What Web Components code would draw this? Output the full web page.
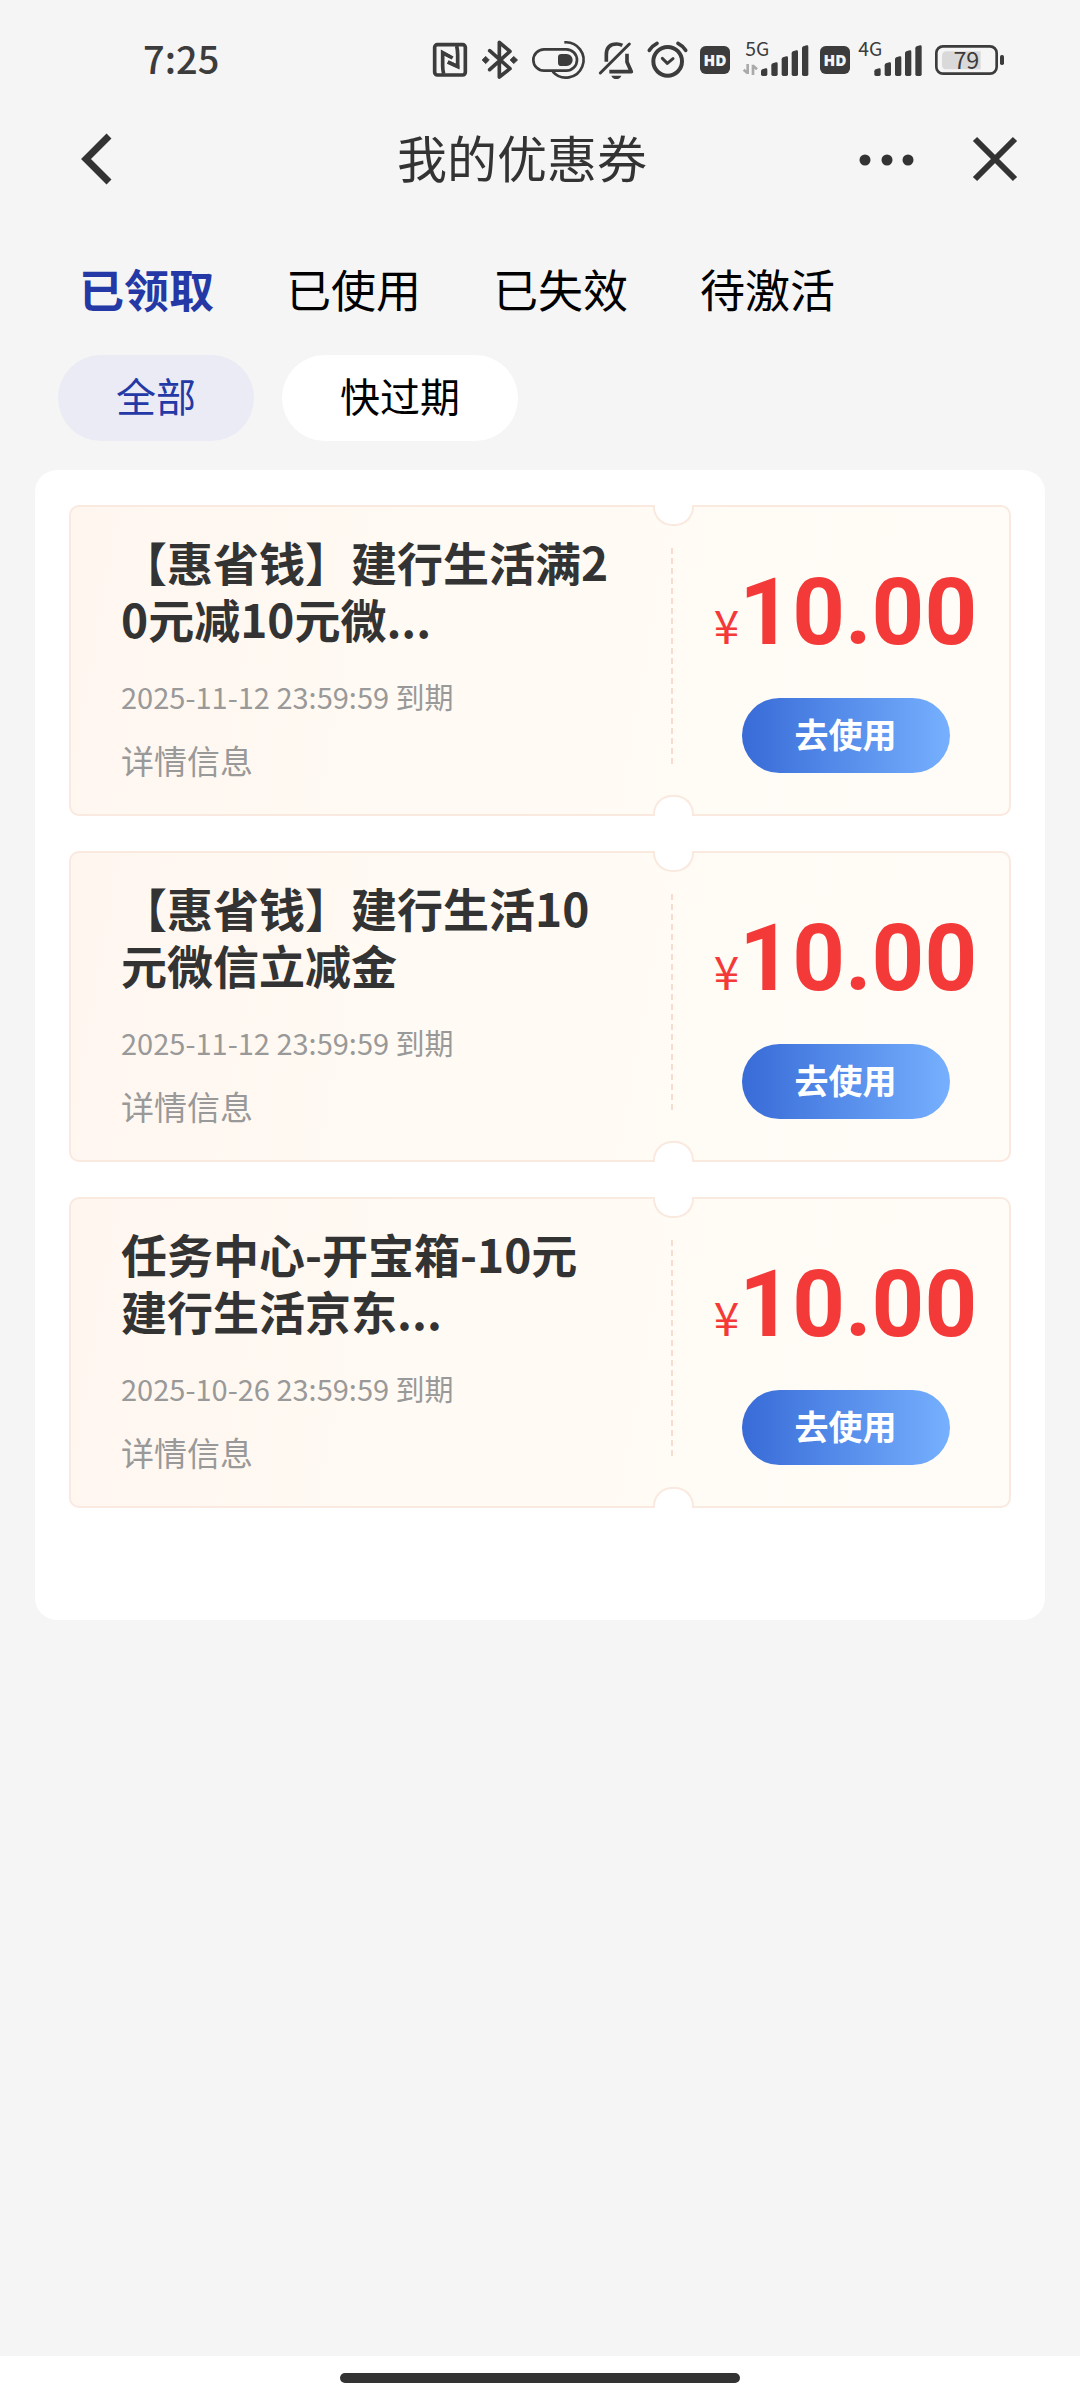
<!DOCTYPE html>
<html lang="zh-CN">
<head>
<meta charset="utf-8">
<meta name="viewport" content="width=device-width, initial-scale=1">
<title>我的优惠券</title>
<style>
  html, body { margin: 0; min-height: 100%; }
  body {
    background: #f5f5f5;
    color: #333;
    font-family: "Noto Sans CJK SC", "Noto Sans", sans-serif;
  }
</style>
</head>
<body>
<coupon-app>
  <status-bar></status-bar>
  <page-header>我的优惠券</page-header>
  <filter-tabs></filter-tabs>
  <filter-chips></filter-chips>
  <coupon-panel>
    <coupon-card price="10.00" expires="2025-11-12 23:59:59">【惠省钱】建行生活满20元减10元微...</coupon-card>
    <coupon-card price="10.00" expires="2025-11-12 23:59:59">【惠省钱】建行生活10元微信立减金</coupon-card>
    <coupon-card price="10.00" expires="2025-10-26 23:59:59">任务中心-开宝箱-10元建行生活京东...</coupon-card>
  </coupon-panel>
  <home-indicator slot="bottom"></home-indicator>
</coupon-app>

<script>
const base = `*{box-sizing:border-box} button{font:inherit;color:inherit;background:none;border:0;padding:0;margin:0;cursor:pointer} svg{display:block;overflow:visible}`;

function define(name, render) {
  customElements.define(name, class extends HTMLElement {
    constructor() {
      super();
      this.attachShadow({ mode: 'open' });
    }
    connectedCallback() {
      this.shadowRoot.innerHTML = `<style>${base}</style>` + render(this);
    }
  });
}

define('coupon-app', () => `
  <style>
    :host { display: flex; flex-direction: column; min-height: 100vh; }
    main { flex: 1; }
  </style>
  <main><slot></slot></main>
  <slot name="bottom"></slot>`);

/* Status icons share a 3:1 drawing grid, 132 units high = 44px. */
const icon = (x, w, body) =>
  `<svg viewBox="${x} 54 ${w} 132" width="${w / 3}" height="44" aria-hidden="true">${body}</svg>`;

const hd = (x) => icon(x, 90, `
  <rect x="${x}" y="78" width="90" height="84" rx="17" fill="#3c3c3c"/>
  <text class="hd" x="${x + 45}" y="137" text-anchor="middle" font-size="46">HD</text>`);

const bars = (x) => [[0, 145], [31, 127], [62, 109], [92, 91], [123, 76]]
  .map(([dx, top]) => `<path d="M${x + dx} ${top + 9} Q${x + dx} ${top + 5} ${x + dx + 4} ${top + 3} L${x + dx + 14} ${top} Q${x + dx + 19} ${top - 1} ${x + dx + 19} ${top + 4} V163 Q${x + dx + 19} 168 ${x + dx + 14} 168 H${x + dx + 5} Q${x + dx} 168 ${x + dx} 163Z" fill="#3c3c3c"/>`).join('');

define('status-bar', () => `
  <style>
    :host { display: flex; align-items: center; justify-content: space-between; padding: 38px 76px 0 143px; color: #3c3c3c; }
    time { font: 500 38px/40px "Noto Sans CJK SC", sans-serif; padding-bottom: 4px; }
    .icons { display: flex; gap: 13px; }
    text { font-family: "Noto Sans CJK SC", sans-serif; fill: #3c3c3c; }
    .hd { font-family: "Open Sans", sans-serif; font-weight: 800; fill: #f5f5f5; }
  </style>
  <time>7:25</time>
  <div class="icons">
    ${icon(96, 108, `
      <rect x="104" y="74" width="92" height="91" rx="8" fill="none" stroke="#3c3c3c" stroke-width="11"/>
      <path d="M131 161 Q128 150 128 138 V98 L158 114 M170 78 Q173 90 173 104 V140 L143 126" fill="none" stroke="#3c3c3c" stroke-width="11" stroke-linejoin="miter"/>
      <path d="M123 102 V92 L152 106 V116Z M178 136 V146 L148 132 V122Z" fill="#3c3c3c"/>`)}
    ${icon(246, 114, `
      <path d="M272 92 L333 146 L301 171 V67 L333 94 L272 149" fill="none" stroke="#3c3c3c" stroke-width="11" stroke-linejoin="round" stroke-linecap="round"/>
      <path d="M249 120 L260 109 L271 120 L260 131Z M333 120 L344 109 L356 120 L344 131Z" fill="#3c3c3c" stroke="#3c3c3c" stroke-width="2" stroke-linejoin="round"/>`)}
    ${icon(396, 159, `
      <rect x="400" y="88" width="131" height="64" rx="32" fill="none" stroke="#3c3c3c" stroke-width="8"/>
      <path d="M493 67 A53 53 0 1 1 458 155" fill="none" stroke="#3c3c3c" stroke-width="8"/>
      <path d="M484 102 H500 A18 18 0 0 1 500 138 H484 Q474 138 474 128 V112 Q474 102 484 102Z" fill="#3c3c3c"/>`)}
    ${icon(594, 111, `
      <path d="M619 125 V104 Q619 72 650 72 Q659 72 667 76 M681 101 V126 L694 155 H628" fill="none" stroke="#3c3c3c" stroke-width="11" stroke-linejoin="round"/>
      <path d="M601 159 L688 72" stroke="#3c3c3c" stroke-width="9" stroke-linecap="round"/>
      <path d="M634 167 H664 Q660 177 649 177 Q638 177 634 167Z" fill="#3c3c3c"/>`)}
    ${icon(744, 117, `
      <circle cx="803" cy="124" r="43" fill="none" stroke="#3c3c3c" stroke-width="12"/>
      <path d="M748 91 Q757 77 771 70 M857 91 Q848 77 834 70" fill="none" stroke="#3c3c3c" stroke-width="11" stroke-linecap="round"/>
      <path d="M787 115 L802 130 L819 116" fill="none" stroke="#3c3c3c" stroke-width="9" stroke-linecap="round" stroke-linejoin="round"/>`)}
    ${hd(900)}
    ${icon(129, 192, `
      <text x="136" y="107" font-size="58">5G</text>
      <path d="M143 132 V162 M143 160 L131 149 M159 165 V134 M159 137 L171 148" fill="none" stroke="#aaa" stroke-width="8"/>
      ${bars(183)}`)}
    ${hd(363)}
    ${icon(486, 177, `
      <text x="472" y="107" font-size="58">4G</text>
      ${bars(520)}`)}
    ${icon(705, 207, `
      <rect x="709" y="79" width="181" height="82" rx="20" fill="none" stroke="#3c3c3c" stroke-width="8"/>
      <path d="M740 94 H842 V148 H740 Q726 148 726 134 V108 Q726 94 740 94Z" fill="#d9d9d9"/>
      <rect x="900" y="105" width="12" height="30" rx="5" fill="#3c3c3c"/>
      <text x="799" y="147" text-anchor="middle" font-size="70">79</text>`)}
  </div>`);

define('page-header', () => `
  <style>
    :host { display: grid; grid-template-columns: 1fr auto 1fr; align-items: center; padding: 41px 62px 0 80px; }
    h1 { margin: 0 54px 6px 0; font-size: 50px; line-height: 66px; font-weight: 400; }
    .nav { display: flex; }
    .actions { display: flex; justify-content: flex-end; align-items: center; gap: 58px; }
  </style>
  <div class="nav"><button aria-label="返回"><svg width="32" height="52" viewBox="0 0 32 52"><path d="M29 3 L6 26 L29 49" fill="none" stroke="#333" stroke-width="7"/></svg></button></div>
  <h1><slot></slot></h1>
  <div class="actions">
    <button aria-label="更多"><svg width="56" height="44" viewBox="0 0 56 44" fill="#333"><circle cx="7" cy="23" r="5.5"/><circle cx="29" cy="23" r="5.5"/><circle cx="50" cy="23" r="5.5"/></svg></button>
    <button aria-label="关闭"><svg width="46" height="46" viewBox="0 0 46 46"><path d="M3 3 L43 43 M43 3 L3 43" stroke="#333" stroke-width="6"/></svg></button>
  </div>`);

define('filter-tabs', () => `
  <style>
    :host { display: block; padding: 62px 79px 0; }
    nav { display: flex; gap: 72px; }
    button { font-size: 45px; line-height: 64px; color: #000; white-space: nowrap; }
    [aria-selected=true] { font-weight: 700; color: #2439a6; }
  </style>
  <nav role="tablist">
    <button role="tab" aria-selected="true">已领取</button>
    <button role="tab" aria-selected="false">已使用</button>
    <button role="tab" aria-selected="false">已失效</button>
    <button role="tab" aria-selected="false">待激活</button>
  </nav>`);

define('filter-chips', () => `
  <style>
    :host { display: flex; gap: 28px; padding: 34px 58px 0; }
    button { padding: 0 58px 6px; border-radius: 43px; background: #fff; color: #000; font-size: 40px; line-height: 80px; white-space: nowrap; }
    [aria-pressed=true] { background: #eaebf4; color: #2439a6; }
  </style>
  <button aria-pressed="true">全部</button>
  <button aria-pressed="false">快过期</button>`);

define('coupon-panel', () => `
  <style>
    :host { display: flex; flex-direction: column; gap: 35px; margin: 29px 35px 0; padding: 35px 34px 112px; background: #fff; border-radius: 22px; }
  </style>
  <slot></slot>`);

define('coupon-card', (el) => `
  <style>
    :host { display: grid; grid-template-columns: 1fr 338px; --edge: #f9e9df;
      border: 2px solid var(--edge); border-radius: 10px;
      background: linear-gradient(100deg, #fff6f0 0%, #fffaf3 35%, #fffcf7 100%); }
    .info { padding: 26px 56px 32px 50px; }
    h2 { margin: 0 0 29px; min-height: 114px; font-size: 46px; line-height: 57px; font-weight: 700; word-break: break-all; }
    p { margin: 0 0 22px; font-size: 29px; line-height: 40px; color: #999; }
    .info button { display: block; font-size: 33px; line-height: 44px; color: #999; }
    .offer { position: relative; display: flex; flex-direction: column; align-items: center; padding: 66px 0 0 11px; }
    .offer::before, .offer::after { content: ""; position: absolute; left: -18px; width: 37px; height: 19px; background: #fff; border: 2px solid var(--edge); }
    .offer::before { top: -2px; border-top: 0; border-radius: 0 0 19px 19px; }
    .offer::after { bottom: -2px; border-bottom: 0; border-radius: 19px 19px 0 0; }
    .line { position: absolute; left: 0; top: 41px; bottom: 48px; width: 2px;
      background: repeating-linear-gradient(#f8dccf 0 6px, transparent 6px 10px); }
    .price { display: flex; align-items: baseline; color: #f43a38; margin-bottom: 45px; }
    .price span { font-size: 46px; line-height: 46px; }
    .price strong { font: 700 92px/80px Roboto, sans-serif; }
    .offer button { width: 208px; height: 75px; padding-bottom: 4px; border-radius: 38px; font-size: 34px; font-weight: 700; color: #fff;
      background: linear-gradient(90deg, #386bd7, #76b0fe); }
  </style>
  <div class="info">
    <h2><slot></slot></h2>
    <p>${el.getAttribute('expires')} 到期</p>
    <button>详情信息</button>
  </div>
  <div class="offer">
    <div class="line"></div>
    <div class="price"><span>¥</span><strong>${el.getAttribute('price')}</strong></div>
    <button>去使用</button>
  </div>`);

define('home-indicator', () => `
  <style>
    :host { display: flex; justify-content: center; padding: 17px 0; background: #fff; }
    div { width: 37%; height: 10px; border-radius: 5px; background: #333; }
  </style>
  <div></div>`);
</script>
</body>
</html>
